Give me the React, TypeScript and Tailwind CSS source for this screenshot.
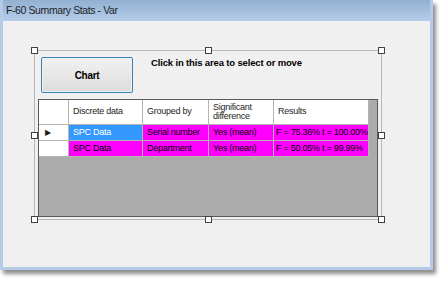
const FONT = { fontFamily: '"Liberation Sans", Arial, sans-serif' };

type Row = { data: string; group: string; sig: string; result: string; selected?: boolean };

const ROWS: Row[] = [
  { data: "SPC Data", group: "Serial number", sig: "Yes (mean)", result: "F = 75.36%  t = 100.00%", selected: true },
  { data: "SPC Data", group: "Department", sig: "Yes (mean)", result: "F = 50.05%  t = 99.99%" },
];

function Handle({ className }: { className: string }) {
  return <span className={`absolute h-[7px] w-[7px] border border-[#404040] bg-white ${className}`} />;
}

function Cell({ children, className = "" }: { children?: React.ReactNode; className?: string }) {
  return (
    <div className={`flex items-center overflow-hidden border-r border-b border-[#b4b4b4] px-[4px] ${className}`}>
      {children}
    </div>
  );
}

export default function App() {
  return (
    <div className="h-[283px] w-[445px] overflow-hidden bg-white" style={FONT}>
      <div className="flex h-[270px] w-[433px] flex-col border-x-[3px] border-b-[3px] border-[#b3cbe6] bg-[#f0f0f0] shadow-[3px_4px_4px_rgba(0,0,0,0.45)]">
        <div className="flex h-[21px] shrink-0 items-center bg-gradient-to-b from-[#93b0d2] to-[#b5cde9] pl-[3px] text-[10.5px] tracking-[-0.4px] text-[#1e1e1e]">
          F-60 Summary Stats - Var
        </div>

        <div className="relative ml-[31px] mt-[29px] h-[170px] w-[348px] border border-[#b8b8b8]">
          <Handle className="-left-[4px] -top-[4px]" />
          <Handle className="left-[170px] -top-[4px]" />
          <Handle className="-right-[4px] -top-[4px]" />
          <Handle className="-left-[4px] top-[81px]" />
          <Handle className="-right-[4px] top-[81px]" />
          <Handle className="-left-[4px] -bottom-[4px]" />
          <Handle className="left-[170px] -bottom-[4px]" />
          <Handle className="-right-[4px] -bottom-[4px]" />

          <div className="flex items-start pl-[6px] pt-[6px]">
            <button className="h-[36px] w-[92px] rounded-[2px] border border-[#3c7fb1] bg-gradient-to-b from-[#f2f2f2] to-[#dcdcdc] text-[10px] font-bold tracking-[-0.3px] text-black shadow-[inset_0_0_0_1px_#e8f4fc]">
              Chart
            </button>
            <div className="ml-[18px] mt-[-1px] text-[9.5px] font-bold tracking-[-0.15px] text-black">
              Click in this area to select or move
            </div>
          </div>

          <div className="ml-[3px] mt-[6px] h-[118px] w-[340px] border border-[#5a5a5a] bg-[#ababab] text-[9px] tracking-[-0.25px]">
            <div className="grid grid-cols-[30px_74px_66px_65px_95px] whitespace-nowrap text-[#1e1e1e]">
              <Cell className="h-[25px] bg-white" />
              <Cell className="h-[25px] bg-white">Discrete data</Cell>
              <Cell className="h-[25px] bg-white">Grouped by</Cell>
              <div className="flex h-[25px] items-center overflow-hidden border-r border-b border-[#b4b4b4] bg-white px-[4px] leading-[9px] whitespace-normal">
                Significant difference
              </div>
              <Cell className="h-[25px] bg-white">Results</Cell>
              {ROWS.map((r, i) => (
                <div key={i} className="contents">
                  <Cell className="h-[16px] bg-white pl-[6px] text-[8px]">{r.selected ? "▶" : ""}</Cell>
                  <Cell className={`h-[16px] ${r.selected ? "bg-[#3399ff] text-white" : "bg-[#ff00ff] text-black"}`}>
                    {r.data}
                  </Cell>
                  <Cell className="h-[16px] bg-[#ff00ff] text-black">{r.group}</Cell>
                  <Cell className="h-[16px] bg-[#ff00ff] text-black">{r.sig}</Cell>
                  <Cell className="h-[16px] bg-[#ff00ff] pl-[2px] text-black">{r.result}</Cell>
                </div>
              ))}
            </div>
          </div>
        </div>
      </div>
    </div>
  );
}
